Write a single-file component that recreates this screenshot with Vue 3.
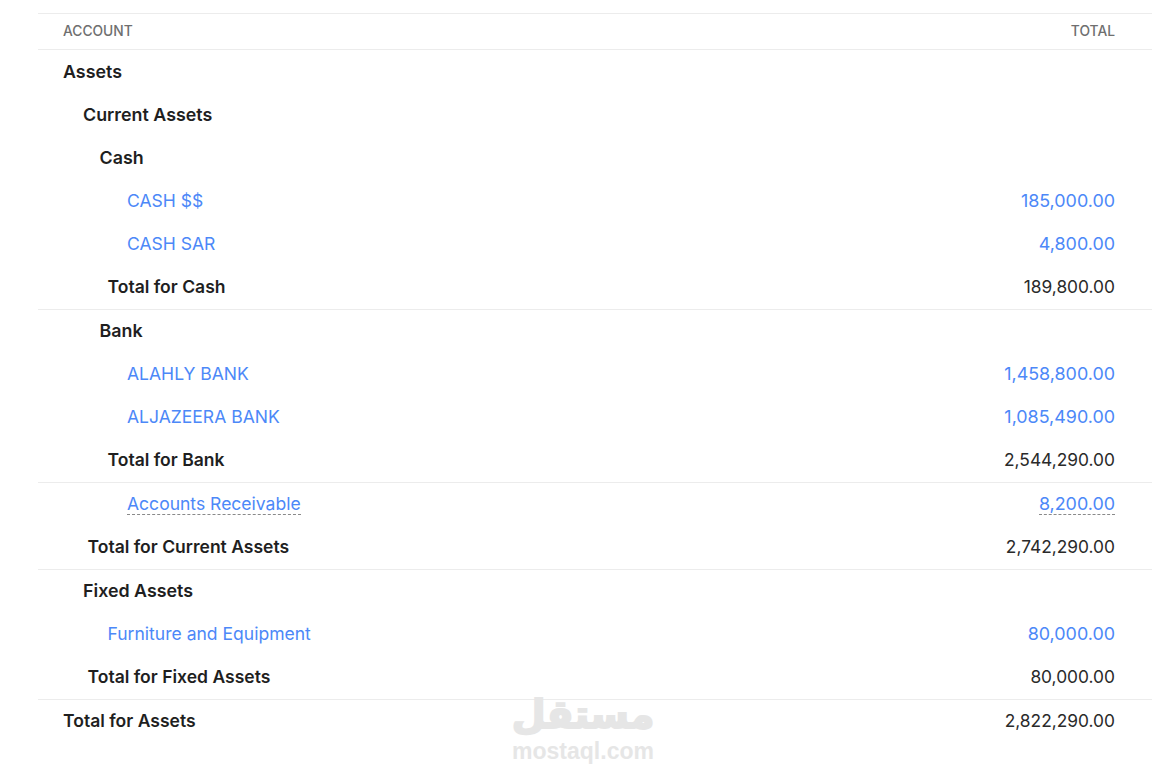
<script setup>
const rows = [
  { label: 'Assets', kind: 'head', indent: 0 },
  { label: 'Current Assets', kind: 'head', indent: 20 },
  { label: 'Cash', kind: 'head', indent: 36.5 },
  { label: 'CASH $$', amount: '185,000.00', kind: 'link', indent: 64 },
  { label: 'CASH SAR', amount: '4,800.00', kind: 'link', indent: 64 },
  { label: 'Total for Cash', amount: '189,800.00', kind: 'total', indent: 44.5, line: true },
  { label: 'Bank', kind: 'head', indent: 36.5 },
  { label: 'ALAHLY BANK', amount: '1,458,800.00', kind: 'link', indent: 64 },
  { label: 'ALJAZEERA BANK', amount: '1,085,490.00', kind: 'link', indent: 64 },
  { label: 'Total for Bank', amount: '2,544,290.00', kind: 'total', indent: 44.5, line: true },
  { label: 'Accounts Receivable', amount: '8,200.00', kind: 'link', indent: 64, dashed: true },
  { label: 'Total for Current Assets', amount: '2,742,290.00', kind: 'total', indent: 24.5, line: true },
  { label: 'Fixed Assets', kind: 'head', indent: 20 },
  { label: 'Furniture and Equipment', amount: '80,000.00', kind: 'link', indent: 44.5 },
  { label: 'Total for Fixed Assets', amount: '80,000.00', kind: 'total', indent: 24.5, line: true },
  { label: 'Total for Assets', amount: '2,822,290.00', kind: 'total', indent: 0 }
]
</script>

<template>
  <main class="page">
    <section class="report">
      <div class="row header">
        <span>ACCOUNT</span>
        <span>TOTAL</span>
      </div>
      <div
        v-for="row in rows"
        :key="row.label"
        class="row"
        :class="[row.kind, { line: row.line, dashed: row.dashed }]"
      >
        <span class="name" :style="{ marginLeft: row.indent + 'px' }"><span class="txt">{{ row.label }}</span></span>
        <span class="amount"><span class="txt">{{ row.amount }}</span></span>
      </div>
    </section>
    <div class="mark">
      <span class="mark-ar" lang="ar" dir="rtl">مستقل</span>
      <span class="mark-en">mostaql.com</span>
    </div>
  </main>
</template>

<style>
html, body { background: #fff; }
</style>

<style scoped>
.page {
  position: relative;
  width: 1167px;
  height: 779px;
  overflow: hidden;
  box-sizing: border-box;
  padding: 13px 15px 0 38px;
  font-family: Inter, "Liberation Sans", sans-serif;
  font-size: 17.55px;
  color: #1f1f1f;
}
.report { border-top: 1px solid #ececec; }
.row {
  display: flex;
  justify-content: space-between;
  align-items: center;
  box-sizing: border-box;
  height: 43px;
  padding: 0 37px 0 25px;
}
.header {
  height: 36px;
  padding-bottom: 2px;
  font-size: 13.8px;
  font-weight: 500;
  color: #6f6f6f;
  border-bottom: 1px solid #ececec;
}
.line {
  height: 45px;
  padding-bottom: 1px;
  margin-bottom: -1px;
  border-bottom: 1px solid #ececec;
}
.head { font-size: 17.85px; font-weight: 600; }
.total .name { font-weight: 600; }
.total .amount { font-size: 17.35px; color: #2a2a2a; }
.link { color: #4c88f8; }
.link .amount { font-size: 17.9px; }
.dashed .txt { border-bottom: 1px dashed #8a8a8a; }
.mark {
  position: absolute;
  left: 483px;
  top: 692px;
  width: 200px;
  display: flex;
  flex-direction: column;
  align-items: center;
  color: #e6e6e6;
  pointer-events: none;
}
.mark-ar {
  font-family: "DejaVu Sans", sans-serif;
  font-weight: 700;
  font-size: 39px;
  line-height: 46px;
  -webkit-text-stroke: 2px #e6e6e6;
}
.mark-en {
  font-family: "Liberation Sans", sans-serif;
  font-weight: 700;
  font-size: 23px;
  line-height: 26px;
}
</style>
